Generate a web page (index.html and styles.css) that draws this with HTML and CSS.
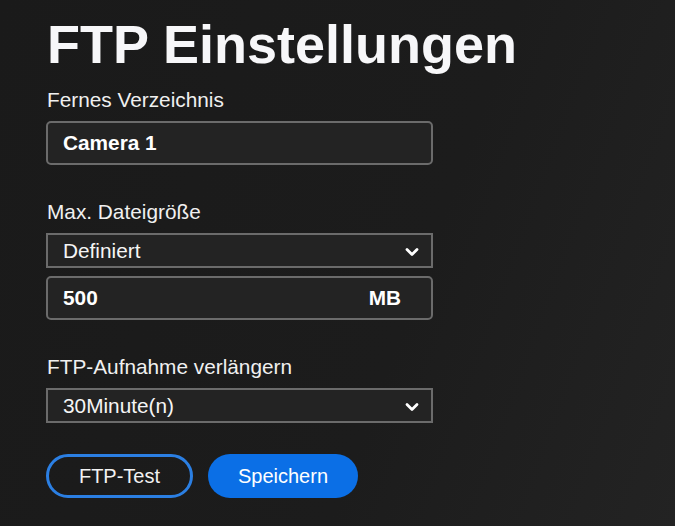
FILE: index.html
```html
<!DOCTYPE html>
<html lang="de">
<head>
<meta charset="UTF-8">
<meta name="viewport" content="width=device-width, initial-scale=1.0">
<title>FTP Einstellungen</title>
<link rel="stylesheet" href="styles.css">
</head>
<body>
<div class="page">
    <h1>FTP Einstellungen</h1>

    <div class="field">
        <label class="label">Fernes Verzeichnis</label>
        <div class="input"><span class="value">Camera 1</span></div>
    </div>

    <div class="field">
        <label class="label">Max. Dateigröße</label>
        <div class="select">
            <span>Definiert</span>
            <svg class="chevron" width="14" height="10" viewBox="0 0 14 10"><path d="M2 2.5 L7 7.5 L12 2.5" fill="none" stroke="#fff" stroke-width="2.8" stroke-linecap="round" stroke-linejoin="round"/></svg>
        </div>
        <div class="input">
            <span class="value">500</span>
            <span class="unit">MB</span>
        </div>
    </div>

    <div class="field">
        <label class="label">FTP-Aufnahme verlängern</label>
        <div class="select">
            <span>30Minute(n)</span>
            <svg class="chevron" width="14" height="10" viewBox="0 0 14 10"><path d="M2 2.5 L7 7.5 L12 2.5" fill="none" stroke="#fff" stroke-width="2.8" stroke-linecap="round" stroke-linejoin="round"/></svg>
        </div>
    </div>

    <div class="buttons">
        <button type="button" class="btn btn-outline">FTP-Test</button>
        <button type="button" class="btn btn-primary">Speichern</button>
    </div>
</div>
</body>
</html>
```

FILE: styles.css
```css
html, body {
    margin: 0;
    padding: 0;
    height: 100%;
}

body {
    font-family: "Liberation Sans", Arial, sans-serif;
    background: linear-gradient(110deg, #1a1a1a 0%, #1c1c1c 60%, #232323 100%);
    color: #f2f2f2;
}

.page {
    width: 387px;
    padding: 12px 0 0 46px;
}

h1 {
    margin: 0 0 0 1px;
    font-size: 54px;
    font-weight: bold;
    line-height: 64px;
    white-space: nowrap;
    color: #f7f7f9;
}

.field {
    margin-top: 12px;
    margin-bottom: 35px;
}

.field + .field {
    margin-top: 0;
}

.label {
    display: block;
    margin-left: 1px;
    font-size: 20.8px;
    line-height: 24px;
    margin-bottom: 9px;
    color: #f0f0f0;
    white-space: nowrap;
}

.input {
    box-sizing: border-box;
    height: 44px;
    border: 2px solid #6b6b6b;
    border-radius: 5px;
    background-color: #232323;
    display: flex;
    align-items: center;
    padding: 0 30px 0 15px;
    font-size: 20.8px;
    font-weight: bold;
    color: #ffffff;
}

.input .value {
    flex: 1;
}

.select {
    box-sizing: border-box;
    height: 35px;
    border: 2px solid #6b6b6b;
    background-color: #232323;
    display: flex;
    align-items: center;
    justify-content: space-between;
    padding: 0 12px 0 15px;
    font-size: 20.8px;
    color: #f5f5f5;
    margin-bottom: 8px;
}

.chevron {
    display: block;
    margin-top: 2px;
}

.buttons {
    display: flex;
    gap: 15px;
    margin-top: -4px;
}

.btn {
    box-sizing: border-box;
    height: 44px;
    border-radius: 22px;
    font-family: "Liberation Sans", Arial, sans-serif;
    font-size: 20px;
    cursor: pointer;
    color: #f2f2f2;
}

.btn-outline {
    width: 147px;
    background: transparent;
    border: 3px solid #2b7fe3;
}

.btn-primary {
    width: 150px;
    background-color: #0b6fe6;
    border: none;
    color: #ffffff;
}
```
